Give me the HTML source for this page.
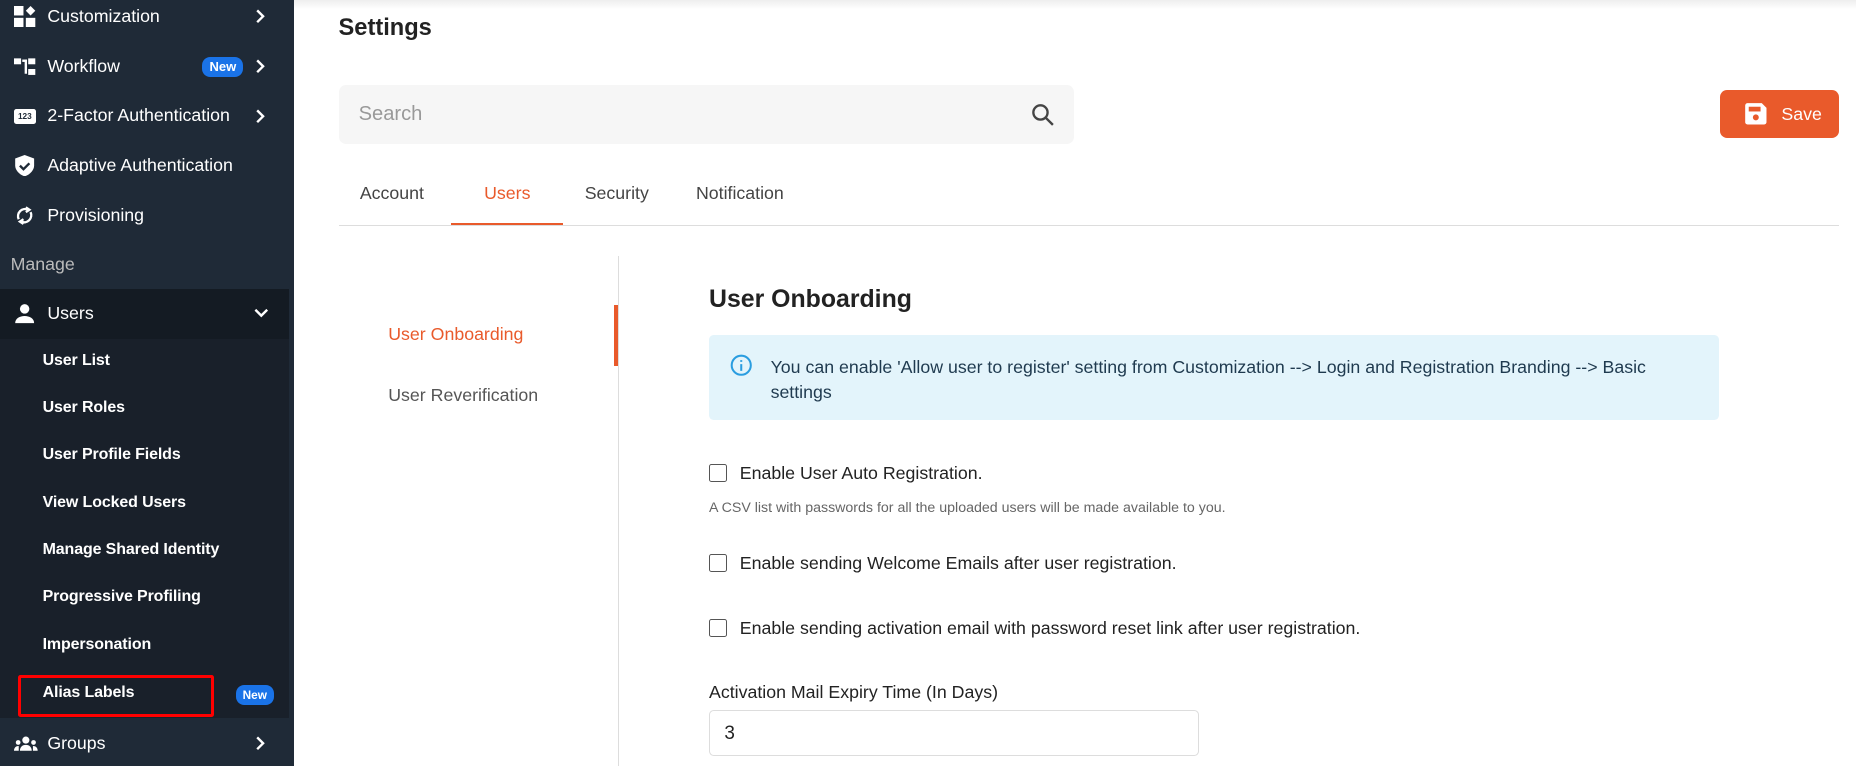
<!DOCTYPE html>
<html><head><meta charset="utf-8"><style>
*{box-sizing:border-box;margin:0;padding:0}
html,body{width:1856px;height:766px;overflow:hidden;background:#fff}
#w{zoom:1.18367;width:1568px;height:647px;position:relative;font-family:"Liberation Sans",sans-serif}
.a{position:absolute;white-space:nowrap}
#sb{position:absolute;left:0;top:0;width:248px;height:647px;background:#1f2a37}
.mi{position:absolute;left:0;width:244px;height:42px;color:#fff;font-size:15px}
.mi .t{position:absolute;left:40px;top:12px}
.mi .ic{position:absolute;left:12px;top:12px;width:18px;height:18px}
.chev{position:absolute;left:216px;top:14px;width:8px;height:14px}
.sub{position:absolute;left:36px;color:#fff;font-size:13.5px;font-weight:bold;letter-spacing:-.1px}
.new{position:absolute;background:#1a73e8;color:#fff;font-size:11px;font-weight:bold;border-radius:7px;padding:2px 6px;line-height:13px}
.cb{position:absolute;left:599px;width:15px;height:15px;border:1.5px solid #555;border-radius:2px}
.lb{position:absolute;left:625px;font-size:15px;color:#222}
</style></head><body><div id="w">
<div id="sb">
 <div class="mi" style="top:-7px"><svg class="ic" viewBox="0 0 18 18" fill="#fff"><rect x="0" y="0" width="8" height="8"/><rect x="0" y="10" width="8" height="8"/><rect x="10" y="10" width="8" height="8"/><path d="M14 0l4 4-4 4-4-4z"/></svg><span class="t">Customization</span><svg class="chev" viewBox="0 0 8 14"><path d="M1 2l5 5-5 5" stroke="#fff" stroke-width="2" fill="none"/></svg></div>
 <div class="mi" style="top:35px"><svg class="ic" viewBox="0 0 18 18" fill="#fff"><rect x="0" y="2" width="6" height="5"/><rect x="7" y="3" width="4" height="2"/><rect x="9" y="3" width="2" height="12"/><rect x="12" y="2" width="6" height="5"/><rect x="12" y="11" width="6" height="5"/></svg><span class="t">Workflow</span><span class="new" style="left:171px;top:13px">New</span><svg class="chev" viewBox="0 0 8 14"><path d="M1 2l5 5-5 5" stroke="#fff" stroke-width="2" fill="none"/></svg></div>
 <div class="mi" style="top:77px"><div class="ic" style="background:#fff;height:13px;top:15px;border-radius:2px;color:#1f2a37;font-size:7px;font-weight:bold;text-align:center;line-height:13px">123</div><span class="t">2-Factor Authentication</span><svg class="chev" viewBox="0 0 8 14"><path d="M1 2l5 5-5 5" stroke="#fff" stroke-width="2" fill="none"/></svg></div>
 <div class="mi" style="top:119px"><svg class="ic" viewBox="0 0 18 18"><path d="M9 0l8 3v6c0 4-4 8-8 9-4-1-8-5-8-9V3z" fill="#fff"/><path d="M5 9l3 3 5-5" stroke="#1f2a37" stroke-width="2" fill="none"/></svg><span class="t">Adaptive Authentication</span></div>
 <div class="mi" style="top:161px"><svg class="ic" viewBox="0 0 18 18" fill="none" stroke="#fff" stroke-width="2"><path d="M4 12A6 6 0 0 1 12 4M14 6a6 6 0 0 1-8 8"/><path d="M10 2l3 2-3 2M8 16l-3-2 3-2" /></svg><span class="t">Provisioning</span></div>
 <div class="a" style="left:9px;top:215px;color:#bbb;font-size:15px">Manage</div>
 <div style="position:absolute;left:0;top:244px;width:244px;height:363px;background:#19202a"></div>
 <div class="mi" style="top:244px;background:#141b23"><svg class="ic" viewBox="0 0 18 18" fill="#fff"><circle cx="9" cy="5" r="4"/><path d="M1 17c0-4 4-6 8-6s8 2 8 6z"/></svg><span class="t">Users</span><svg class="chev" viewBox="0 0 14 14" style="width:14px;left:214px"><path d="M2 4l5 5 5-5" stroke="#fff" stroke-width="2" fill="none"/></svg></div>
 <div class="sub" style="top:297px">User List</div>
 <div class="sub" style="top:337px">User Roles</div>
 <div class="sub" style="top:377px">User Profile Fields</div>
 <div class="sub" style="top:417px">View Locked Users</div>
 <div class="sub" style="top:457px">Manage Shared Identity</div>
 <div class="sub" style="top:497px">Progressive Profiling</div>
 <div class="sub" style="top:537px">Impersonation</div>
 <div class="sub" style="top:578px">Alias Labels</div>
 <div style="position:absolute;left:15px;top:570px;width:166px;height:36px;border:3px solid #f00;border-radius:2px"></div>
 <span class="new" style="left:199px;top:579px;font-size:10px">New</span>
 <div class="mi" style="top:607px"><svg class="ic" viewBox="0 0 20 18" fill="#fff" style="width:20px"><circle cx="10" cy="6" r="3"/><circle cx="3.5" cy="8" r="2"/><circle cx="16.5" cy="8" r="2"/><path d="M5 15c0-3 2-5 5-5s5 2 5 5zM0 15c0-2 1-4 4-4v4zM20 15c0-2-1-4-4-4v4z"/></svg><span class="t">Groups</span><svg class="chev" viewBox="0 0 8 14"><path d="M1 2l5 5-5 5" stroke="#fff" stroke-width="2" fill="none"/></svg></div>
</div>
<div style="position:absolute;left:248px;top:0;width:1320px;height:8px;background:linear-gradient(#eee,#fff)"></div>
<div class="a" style="left:286px;top:13px;font-size:20px;font-weight:bold;color:#222">Settings</div>
<div style="position:absolute;left:286px;top:72px;width:621px;height:50px;background:#f6f6f6;border-radius:6px"></div>
<div class="a" style="left:303px;top:87px;font-size:17px;color:#999">Search</div>
<svg class="a" style="left:871px;top:87px" width="20" height="20" viewBox="0 0 20 20" fill="none" stroke="#444" stroke-width="2"><circle cx="8" cy="8" r="6"/><path d="M12.5 12.5l6 6"/></svg>
<div style="position:absolute;left:1453px;top:76px;width:101px;height:41px;background:#e95a2b;border-radius:6px"></div>
<svg class="a" style="left:1473px;top:86px" width="20" height="20" viewBox="0 0 20 20"><path d="M1 3a2 2 0 0 1 2-2h12l4 4v12a2 2 0 0 1-2 2H3a2 2 0 0 1-2-2z" fill="#fff"/><rect x="4" y="4" width="10" height="4" fill="#e95a2b"/><circle cx="10" cy="13" r="2.5" fill="#e95a2b"/></svg>
<div class="a" style="left:1505px;top:88px;font-size:15px;color:#fff">Save</div>
<div class="a" style="left:304px;top:155px;font-size:15px;color:#444">Account</div>
<div class="a" style="left:409px;top:155px;font-size:15px;color:#e95a2b">Users</div>
<div class="a" style="left:494px;top:155px;font-size:15px;color:#444">Security</div>
<div class="a" style="left:588px;top:155px;font-size:15px;color:#444">Notification</div>
<div style="position:absolute;left:286px;top:190px;width:1268px;height:1px;background:#ddd"></div>
<div style="position:absolute;left:381px;top:188px;width:95px;height:2px;background:#e95a2b"></div>
<div style="position:absolute;left:522px;top:216px;width:1px;height:431px;background:#ddd"></div>
<div style="position:absolute;left:519px;top:258px;width:3px;height:51px;background:#e95a2b"></div>
<div class="a" style="left:328px;top:274px;font-size:15px;color:#e95a2b">User Onboarding</div>
<div class="a" style="left:328px;top:325px;font-size:15px;color:#555">User Reverification</div>
<div class="a" style="left:599px;top:242px;font-size:21px;font-weight:bold;color:#222">User Onboarding</div>
<div style="position:absolute;left:599px;top:283px;width:853px;height:72px;background:#e3f4fb;border-radius:4px"></div>
<svg class="a" style="left:617px;top:299px" width="19" height="19" viewBox="0 0 20 20" fill="none" stroke="#2a9de0" stroke-width="1.8"><circle cx="10" cy="10" r="8.5"/><path d="M10 9v6M10 5.5v1.5"/></svg>
<div class="a" style="left:651px;top:300px;font-size:15px;color:#1f3a4f;line-height:21px">You can enable 'Allow user to register' setting from Customization --&gt; Login and Registration Branding --&gt; Basic<br>settings</div>
<div class="cb" style="top:392px"></div><div class="lb" style="top:391px">Enable User Auto Registration.</div>
<div class="a" style="left:599px;top:422px;font-size:12px;color:#666">A CSV list with passwords for all the uploaded users will be made available to you.</div>
<div class="cb" style="top:468px"></div><div class="lb" style="top:467px">Enable sending Welcome Emails after user registration.</div>
<div class="cb" style="top:523px"></div><div class="lb" style="top:522px">Enable sending activation email with password reset link after user registration.</div>
<div class="a" style="left:599px;top:576px;font-size:15px;color:#222">Activation Mail Expiry Time (In Days)</div>
<div style="position:absolute;left:599px;top:600px;width:414px;height:39px;border:1px solid #ddd;border-radius:4px"></div>
<div class="a" style="left:612px;top:611px;font-size:16px;color:#222">3</div>
</div></body></html>
